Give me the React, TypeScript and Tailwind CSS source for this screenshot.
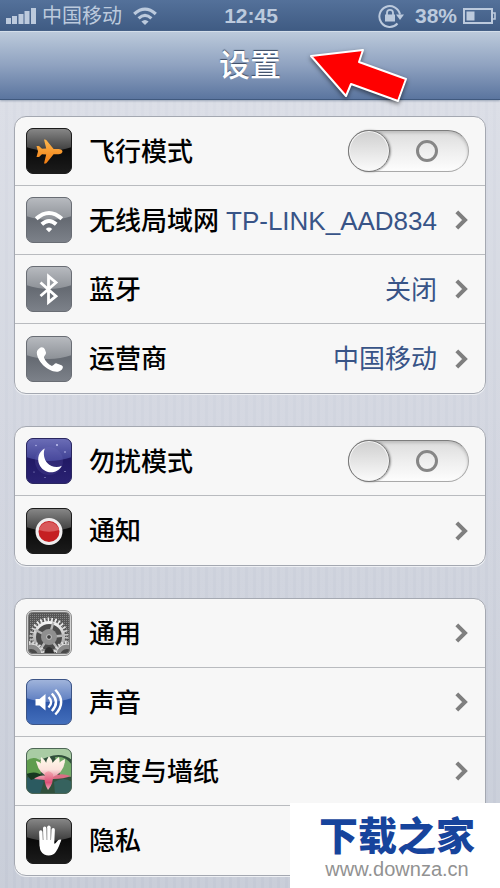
import React, { useState } from 'react';

const TILE_COLORS = {
  black: ['#8a8a8a', '#3c3c3c', '#0b0b0b', '#1c1c1c'],
  gray: ['#b9bcc1', '#8d9197', '#666b73', '#7d828a'],
  purple: ['#6d6fb8', '#3d3f92', '#221a66', '#2a2273'],
  blue: ['#a3b6dc', '#5b7cc0', '#2c55a6', '#4470bd'],
};

const TILE_EDGES = {
  black: '#1c1c1c',
  gray: '#696d74',
  purple: '#2a2760',
  blue: '#3c5486',
};

type TileColor = keyof typeof TILE_COLORS;

const Tile = ({ id, color, children }: { id: string; color: TileColor; children: React.ReactNode }) => {
  const [glossTop, glossBottom, base, baseBottom] = TILE_COLORS[color];
  return (
    <svg viewBox="0 0 46 46" className="size-[46px] shrink-0" aria-hidden="true">
      <defs>
        <linearGradient id={`${id}-gloss`} x1="0" y1="0" x2="0" y2="1">
          <stop offset="0" stopColor={glossTop} />
          <stop offset="1" stopColor={glossBottom} />
        </linearGradient>
        <linearGradient id={`${id}-base`} x1="0" y1="0" x2="0" y2="1">
          <stop offset="0.5" stopColor={base} />
          <stop offset="1" stopColor={baseBottom} />
        </linearGradient>
        <clipPath id={`${id}-clip`}>
          <rect x="0.5" y="0.5" width="45" height="45" rx="6.5" />
        </clipPath>
      </defs>
      <g clipPath={`url(#${id}-clip)`}>
        <rect width="46" height="46" fill={`url(#${id}-base)`} />
        <path d="M0 0H46V19Q34 23 23 23T0 19Z" fill={`url(#${id}-gloss)`} />
        {children}
      </g>
      <rect x="0.5" y="0.5" width="45" height="45" rx="6.5" fill="none" stroke={TILE_EDGES[color]} />
    </svg>
  );
};

const AirplaneIcon = () => (
  <Tile id="airplane" color="black">
    <defs>
      <linearGradient id="orange" x1="0" y1="0" x2="0" y2="1">
        <stop offset="0" stopColor="#ffb84e" />
        <stop offset="1" stopColor="#f07c12" />
      </linearGradient>
    </defs>
    <path
      d="M36.5 23.5C36.5 22 34.5 21 32.5 21H27.6L20.5 12.2Q19.6 11.2 18 11.6L20.2 20.6L16 20.8L13 18H10.5L12 23.5L10.5 29H13L16 26.3L20.2 26.5L18 35.4Q19.6 35.8 20.5 34.9L27.6 26.2H32.5C34.5 26.2 36.5 25 36.5 23.5Z"
      fill="url(#orange)"
    />
  </Tile>
);

const WifiIcon = () => (
  <Tile id="wifi" color="gray">
    <g fill="none" stroke="#fff" strokeWidth="4">
      <path d="M10.2 21.8Q23 10.2 35.8 21.8" />
      <path d="M15.8 27.2Q23 20.8 30.2 27.2" />
    </g>
    <path d="M23 35.2L19.8 32Q23 29.2 26.2 32Z" fill="#fff" />
  </Tile>
);

const BluetoothIcon = () => (
  <Tile id="bluetooth" color="gray">
    <path d="M14.5 16.5L30 30.2L22.5 36.3V10.2L30 16.5L14.5 30" fill="none" stroke="#fff" strokeWidth="2.8" />
  </Tile>
);

const PhoneIcon = () => (
  <Tile id="phone" color="gray">
    <path
      d="M13.2 12.4C15.3 10.3 17.8 11 18.8 13.2L20 16.6C20.4 18.6 18.2 19.6 17.9 21.4C19.5 25.4 22.1 28 25.9 30.1C28 29.6 28.4 27 30.7 27.4L35.5 29.2C37.6 30.2 37.1 32.4 35.4 34C32.6 36.6 28.1 36.2 23.1 33.5C17.3 30.4 12.6 24.8 11.1 18.9C10.3 15.6 11.2 14 13.2 12.4Z"
      fill="#fff"
    />
  </Tile>
);

const MoonIcon = () => (
  <Tile id="moon" color="purple">
    <circle cx="23" cy="23" r="14" fill="#8a83d8" opacity="0.14" />
    <path d="M18.8 10.5C12.8 13.5 10.8 20.5 13.2 26.3C16 33.2 24 36.5 31 32.8C33.3 31.6 34.9 29.9 35.8 27.8C31 30.3 24.8 28.8 21.3 25C17.8 21 17 15 18.8 10.5Z" fill="#fff" />
    <g fill="#c3c5f2">
      <circle cx="31" cy="7" r="1" />
      <circle cx="39" cy="14" r="0.8" />
      <circle cx="10" cy="7.5" r="0.7" />
      <circle cx="8" cy="34" r="0.5" />
      <circle cx="39" cy="33.5" r="0.6" />
      <circle cx="19" cy="39.5" r="0.5" />
    </g>
  </Tile>
);

const NotificationIcon = () => (
  <Tile id="notification" color="black">
    <circle cx="23" cy="23.5" r="12" fill="#c51f22" stroke="#efedee" strokeWidth="3" />
    <path d="M12.8 22A10.5 10.5 0 0 1 33.2 22Q23 25.5 12.8 22Z" fill="#d9595b" />
  </Tile>
);

const GearIcon = () => (
  <svg viewBox="0 0 46 46" className="size-[46px] shrink-0" aria-hidden="true">
    <defs>
      <linearGradient id="gear-metal" x1="0" y1="0" x2="0" y2="1">
        <stop offset="0" stopColor="#f4f4f4" />
        <stop offset="1" stopColor="#8c8c8c" />
      </linearGradient>
      <pattern id="gear-mesh" width="2" height="2" patternUnits="userSpaceOnUse">
        <rect width="2" height="2" fill="#555" />
        <rect width="1" height="1" fill="#858585" />
      </pattern>
      <clipPath id="gear-clip">
        <rect x="2.5" y="2.5" width="41" height="41" rx="4" />
      </clipPath>
    </defs>
    <rect x="0.5" y="0.5" width="45" height="45" rx="6.5" fill="#d2d2d2" stroke="#8f8f8f" />
    <g clipPath="url(#gear-clip)">
      <rect width="46" height="46" fill="url(#gear-mesh)" />
      <circle cx="23" cy="27" r="15" fill="#4b4b4b" />
      <g fill="none" stroke="url(#gear-metal)">
        <circle cx="23" cy="27" r="17.5" strokeWidth="4" strokeDasharray="1.6 2.06" />
        <circle cx="23" cy="27" r="14.5" strokeWidth="3" />
      </g>
      <g stroke="#b5b5b5" strokeWidth="2.4">
        <path d="M23 27L27.3 12.5" />
        <path d="M23 27L9.5 20" />
        <path d="M23 27L38 25.5" />
        <path d="M23 27L14.5 39" />
        <path d="M23 27L32 39" />
      </g>
      <circle cx="23" cy="27" r="8" fill="#8f8f8f" />
      <circle cx="23" cy="27" r="2.4" fill="#3d3d3d" stroke="#c8c8c8" />
      <path d="M17 46Q19 37 23 37T29 46Z" fill="#303030" />
      <g fill="#8a8a8a" stroke="#dedede">
        <circle cx="5" cy="45" r="11" strokeWidth="1" />
        <circle cx="41" cy="45" r="11" strokeWidth="1" />
        <circle cx="5" cy="45" r="12.4" fill="none" strokeWidth="3" strokeDasharray="1.5 2" />
        <circle cx="41" cy="45" r="12.4" fill="none" strokeWidth="3" strokeDasharray="1.5 2" />
      </g>
      <g fill="#4a4a4a">
        <circle cx="5" cy="46" r="7" />
        <circle cx="41" cy="46" r="7" />
      </g>
    </g>
    <rect x="2.5" y="2.5" width="41" height="41" rx="4" fill="none" stroke="#777" />
  </svg>
);

const SoundIcon = () => (
  <Tile id="sound" color="blue">
    <path d="M9.5 20H13.5L19.5 15V31.5L13.5 26.5H9.5Z" fill="#fff" />
    <g fill="none" stroke="#fff" strokeWidth="2.4">
      <path d="M22.5 18.2Q27.8 23.2 22.5 28.5" />
      <path d="M25.8 14.5Q34.2 23.2 25.8 32" />
      <path d="M29.3 10.8Q41 23.2 29.3 35.5" />
    </g>
  </Tile>
);

const LotusIcon = () => (
  <svg viewBox="0 0 46 46" className="size-[46px] shrink-0" aria-hidden="true">
    <defs>
      <linearGradient id="lotus-petal" x1="0" y1="9" x2="0" y2="34" gradientUnits="userSpaceOnUse">
        <stop offset="0" stopColor="#fffbea" />
        <stop offset="0.5" stopColor="#fbe3dc" />
        <stop offset="1" stopColor="#df5f83" />
      </linearGradient>
      <linearGradient id="lotus-front" x1="0" y1="0" x2="0" y2="1">
        <stop offset="0" stopColor="#f3a9b0" />
        <stop offset="0.6" stopColor="#dd5078" />
        <stop offset="1" stopColor="#f4b5c4" />
      </linearGradient>
      <clipPath id="lotus-clip">
        <rect x="0.5" y="0.5" width="45" height="45" rx="6.5" />
      </clipPath>
    </defs>
    <g clipPath="url(#lotus-clip)">
      <rect width="46" height="46" fill="#31503c" />
      <path d="M0 0H46V12Q36 4 22 9T0 16Z" fill="#a9cca4" />
      <path d="M0 13Q9 6 17 15L14 28Q5 31 0 27Z" fill="#5f9c4d" />
      <path d="M29 9Q39 7 46 17V29L34 27Z" fill="#73aa69" />
      <path d="M0 30Q8 27 18 33L14 46H0Z" fill="#2b5a60" />
      <path d="M28 34Q38 28 46 34V46H29Z" fill="#36625e" />
      <path d="M0 26Q10 22 17 28L5 32Z" fill="#163820" />
      <g fill="url(#lotus-petal)">
        <path d="M8 31Q15 25 24 29L19 32Z" />
        <path d="M25 29Q33 24 45 28Q38 31 27 31Z" fill="#dc6d84" />
        <path d="M10 13Q19 15 24 29Q13 27 10 13Z" />
        <path d="M39 11Q39 25 25 30Q26 17 39 11Z" />
        <path d="M15 9Q23 14 24 30Q13 23 15 9Z" />
        <path d="M33 9Q36 22 25 30Q20 17 33 9Z" />
        <path d="M23 8Q31 17 24 31Q16 18 23 8Z" />
      </g>
      <path d="M19 25Q23 21 27 26Q28 35 22 42Q17 34 19 25Z" fill="url(#lotus-front)" />
    </g>
    <rect x="0.5" y="0.5" width="45" height="45" rx="6.5" fill="none" stroke="#4d6655" />
  </svg>
);

const HandIcon = () => (
  <Tile id="hand" color="black">
    <g stroke="#fff" strokeWidth="3.4" strokeLinecap="round">
      <path d="M14.8 14L15.4 28" />
      <path d="M18.7 10.3L19.2 28" />
      <path d="M22.9 9.3V28" />
      <path d="M27.2 11.8L26.4 28" />
    </g>
    <path
      d="M13.7 22H28V25.8Q29.6 25.8 31 23.4Q32.6 20.8 35.4 21.7Q34.3 24.6 33 28Q30 35 27 36.5Q22.5 38.3 18.3 36.5Q13.7 34 13.7 28Z"
      fill="#fff"
    />
  </Tile>
);

const Chevron = () => (
  <svg viewBox="0 0 13 20" className="ml-[18px] h-5 w-[13px] shrink-0" aria-hidden="true">
    <path d="M1.8 1.8L10 10L1.8 18.2" fill="none" stroke="#7f7f7f" strokeWidth="4" />
  </svg>
);

const Group = ({ children }: { children: React.ReactNode }) => (
  <section className="divide-y divide-[#b9bbbf] overflow-hidden rounded-xl border border-[#a4a8b1] bg-[#f7f7f7] shadow-[0_1px_0_#eef0f4]">
    {children}
  </section>
);

const LinkRow = ({ icon, label, value }: { icon: React.ReactNode; label: string; value?: string }) => (
  <button type="button" className="flex h-[69px] w-full items-center pr-[17px] pl-[11px] text-left text-[26px]">
    {icon}
    <span className="ml-[17px] grow pt-0.5 font-medium whitespace-nowrap text-black">{label}</span>
    {value && <span className="pt-0.5 whitespace-nowrap text-[#385487]">{value}</span>}
    <Chevron />
  </button>
);

const SwitchRow = ({ icon, label }: { icon: React.ReactNode; label: string }) => {
  const [on, setOn] = useState(false);

  return (
    <label className="flex h-[69px] items-center pr-4 pl-[11px] text-[26px]">
      {icon}
      <span className="ml-[17px] grow pt-0.5 font-medium text-black">{label}</span>
      <input
        type="checkbox"
        role="switch"
        checked={on}
        onChange={(e) => setOn(e.target.checked)}
        className="relative h-[42px] w-[121px] shrink-0 appearance-none rounded-full border border-[#a9a9a9] border-t-[#7d7d7d] bg-linear-to-b from-[#dcdcdc] via-[#eeeeee] to-[#fdfdfd] shadow-[inset_0_2px_3px_#bdbdbd] before:absolute before:-top-px before:-left-px before:size-[42px] before:rounded-full before:border before:border-[#777777] before:bg-linear-to-b before:from-[#cfcfcf] before:to-[#fbfbfb] before:shadow-[inset_0_0_0_1px_#f6f6f6,1px_0_2px_#9a9a9a] after:absolute after:top-[9px] after:left-[67px] after:size-[22px] after:rounded-full after:border-3 after:border-[#868686] checked:from-[#2f6fe0] checked:to-[#78adf5] checked:before:left-[78px] checked:after:left-[24px] checked:after:border-white"
      />
    </label>
  );
};

const StatusBar = () => (
  <div className="grid h-[31px] grid-cols-[1fr_auto_1fr] items-center bg-linear-to-b from-[#54719a] to-[#3f5b83] pr-1 pl-[6px] text-[21px] text-[#bccadd]">
    <div className="flex items-center">
      <svg viewBox="0 0 30 16" className="h-4 w-[30px] fill-current" aria-hidden="true">
        <rect x="0" y="10" width="5" height="6" />
        <rect x="6" y="8" width="5" height="8" />
        <rect x="12.5" y="6" width="5" height="10" />
        <rect x="18.5" y="3" width="5" height="13" />
        <rect x="25" y="0" width="5" height="16" />
      </svg>
      <span className="ml-[6px] text-[20px] whitespace-nowrap">中国移动</span>
      <svg viewBox="0 0 24 18" className="ml-[11px] h-[18px] w-6" aria-hidden="true">
        <g fill="none" stroke="currentColor" strokeWidth="3.2">
          <path d="M1.2 7Q12 -2.8 22.8 7" />
          <path d="M5.6 11.4Q12 5.4 18.4 11.4" />
        </g>
        <path d="M12 18L8.4 14.4Q12 11.4 15.6 14.4Z" fill="currentColor" />
      </svg>
    </div>
    <span className="font-bold">12:45</span>
    <div className="flex items-center justify-end">
      <svg viewBox="0 0 26 24" className="h-6 w-[26px]" aria-hidden="true">
        <path d="M19.5 19.5A10.4 10.4 0 1 1 22 10.5" fill="none" stroke="currentColor" strokeWidth="2" />
        <path d="M18 10.5H26L22 16Z" fill="currentColor" />
        <rect x="7" y="10.5" width="10" height="7" fill="currentColor" />
        <path d="M9 11V8.8A3 3 0 0 1 15 8.8V11" fill="none" stroke="currentColor" strokeWidth="1.8" />
      </svg>
      <span className="ml-[11px] font-bold">38%</span>
      <svg viewBox="0 0 33 16" className="ml-[6px] h-4 w-[33px]" aria-hidden="true">
        <rect x="1" y="1" width="28" height="14" fill="none" stroke="currentColor" strokeWidth="2" />
        <rect x="3.5" y="3.5" width="8" height="9" fill="currentColor" />
        <path d="M30 5H32V11H30" fill="none" stroke="currentColor" strokeWidth="1.6" />
      </svg>
    </div>
  </div>
);

const NavBar = () => (
  <header className="relative flex h-[69px] items-center justify-center border-t border-b border-t-[#d3deea] border-b-[#40597e] bg-linear-to-b from-[#bccadb] via-[#8fa2c0] to-[#5b759f] pt-0.5 shadow-[0_1px_2px_#9ba6b8]">
    <h1 className="text-[31px] font-medium text-white [text-shadow:0_-1px_1px_#3b4a62]">设置</h1>
    <svg
      viewBox="0 0 98 56"
      className="absolute top-[15px] left-1/2 ml-[59px] h-14 w-[98px] drop-shadow-[0_2px_2px_#00000080]"
      aria-hidden="true"
    >
      <path
        d="M2 9L54 3L50 15L97 32L89 54L42 37L37 49Z"
        fill="#ff0000"
        stroke="#fff"
        strokeWidth="2"
        strokeLinejoin="round"
      />
    </svg>
  </header>
);

const Watermark = () => (
  <div className="absolute right-0 bottom-0 flex h-[85px] w-[210px] flex-col items-center bg-white pt-[14px] pl-1">
    <span className="text-[39px] leading-10 font-black text-[#17449c]">下载之家</span>
    <span className="text-xl leading-6 text-[#929292]">www.downza.cn</span>
  </div>
);

export default function App() {
  return (
    <div className="relative min-h-screen overflow-hidden bg-[#cdd1dc] font-['Liberation_Sans','Noto_Sans_CJK_SC',sans-serif]">
      <StatusBar />
      <NavBar />
      <main className="flex flex-col gap-8 bg-[repeating-linear-gradient(90deg,#ffffff14_0_5px,transparent_5px_8px),linear-gradient(#d9dce5,#c5cad6)] px-[14px] pt-4 pb-3">
        <Group>
          <SwitchRow icon={<AirplaneIcon />} label="飞行模式" />
          <LinkRow icon={<WifiIcon />} label="无线局域网" value="TP-LINK_AAD834" />
          <LinkRow icon={<BluetoothIcon />} label="蓝牙" value="关闭" />
          <LinkRow icon={<PhoneIcon />} label="运营商" value="中国移动" />
        </Group>
        <Group>
          <SwitchRow icon={<MoonIcon />} label="勿扰模式" />
          <LinkRow icon={<NotificationIcon />} label="通知" />
        </Group>
        <Group>
          <LinkRow icon={<GearIcon />} label="通用" />
          <LinkRow icon={<SoundIcon />} label="声音" />
          <LinkRow icon={<LotusIcon />} label="亮度与墙纸" />
          <LinkRow icon={<HandIcon />} label="隐私" />
        </Group>
      </main>
      <Watermark />
    </div>
  );
}
